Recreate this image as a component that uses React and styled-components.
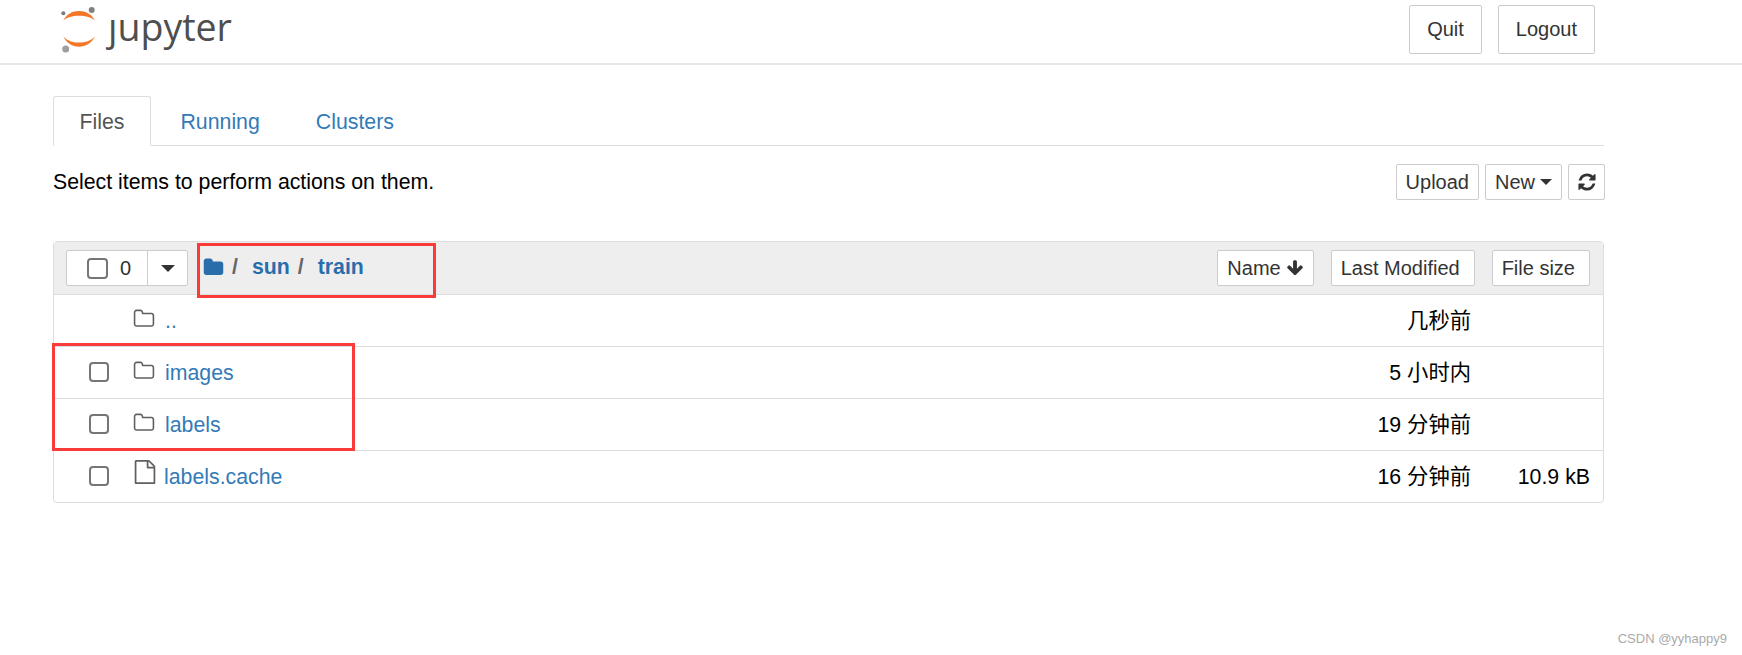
import React from 'react';
import styled, { createGlobalStyle } from 'styled-components';

const FONT = '"Liberation Sans", "Noto Sans CJK SC", Arial, sans-serif';

const ICONS = {
    folder: 'M1728 608v704q0 92-66 158t-158 66h-1216q-92 0-158-66t-66-158v-960q0-92 66-158t158-66h320q92 0 158 66t66 158v32h672q92 0 158 66t66 158z',
    folderOpen: 'M1600 1312v-704q0-40-28-68t-68-28h-704q-40 0-68-28t-28-68v-64q0-40-28-68t-68-28h-320q-40 0-68 28t-28 68v960q0 40 28 68t68 28h1216q40 0 68-28t28-68zm128-704v704q0 92-66 158t-158 66h-1216q-92 0-158-66t-66-158v-960q0-92 66-158t158-66h320q92 0 158 66t66 158v32h672q92 0 158 66t66 158z',
    file: 'M1596 380q28 28 48 76t20 88v1152q0 40-28 68t-68 28h-1344q-40 0-68-28t-28-68v-1600q0-40 28-68t68-28h896q40 0 88 20t76 48zm-444-244v376h376q-10-29-22-41l-313-313q-12-12-41-22zm384 1528v-1024h-416q-40 0-68-28t-28-68v-416h-768v1536h1280z',
    arrowDown: 'M1675 832q0 53-37 90l-651 652q-39 37-91 37-53 0-90-37l-651-652q-38-36-38-90 0-53 38-91l74-75q39-37 91-37 53 0 90 37l294 294v-704q0-52 38-90t90-38h128q52 0 90 38t38 90v704l294-294q37-37 90-37 52 0 91 37l75 75q37 39 37 91z',
    refresh: 'M1639 1056q0 5-1 7-64 268-268 434.5t-478 166.5q-146 0-282.5-55t-243.5-157l-129 129q-19 19-45 19t-45-19-19-45v-448q0-26 19-45t45-19h448q26 0 45 19t19 45-19 45l-137 137q71 66 161 102t187 36q134 0 250-65t186-179q11-17 53-117 8-23 30-23h192q13 0 22.5 9.5t9.5 22.5zm25-800v448q0 26-19 45t-45 19h-448q-26 0-45-19t-19-45 19-45l138-138q-148-137-349-137-134 0-250 65t-186 179q-11 17-53 117-8 23-30 23h-199q-13 0-22.5-9.5t-9.5-22.5v-7q65-268 270-434.5t480-166.5q146 0 284 55.5t245 156.5l130-129q19-19 45-19t45 19 19 45z',
};

const rows = [
    { id: 'up', kind: 'folderOpen', name: '..', time: '几秒前', size: '', noCheck: true },
    { id: 'images', kind: 'folderOpen', name: 'images', time: '5 小时内', size: '' },
    { id: 'labels', kind: 'folderOpen', name: 'labels', time: '19 分钟前', size: '' },
    { id: 'cache', kind: 'file', name: 'labels.cache', time: '16 分钟前', size: '10.9 kB' },
];

function Icon({ name, size, color }) {
    return (
        <svg width={size} height={size} viewBox="0 0 1792 1792" fill={color} style={{ flex: 'none' }}>
            <path d={ICONS[name]} />
        </svg>
    );
}

function LogoMark() {
    return (
        <svg width="38" height="48" viewBox="0 0 38 48" style={{ flex: 'none' }}>
            <path d="M2.3 15.7 C8 2.7 28 2.7 34 15.7 C28 9 8 9 2.3 15.7 Z" fill="#f37726" />
            <path d="M2.3 31 C8 39.8 28 39.8 34 31 C28 45.3 8 45.3 2.3 31 Z" fill="#f37726" />
            <circle cx="30.7" cy="5" r="3" fill="#808080" />
            <circle cx="2.3" cy="8.3" r="2" fill="#7a7a7a" />
            <circle cx="4.7" cy="44" r="3.5" fill="#9e9e9e" />
        </svg>
    );
}

function App() {
    return (
        <Page>
            <GlobalStyle />
            <Header>
                <Logo>
                    <LogoMark />
                    <Wordmark>ȷupyter</Wordmark>
                </Logo>
                <HeaderActions>
                    <HeaderButton>Quit</HeaderButton>
                    <HeaderButton>Logout</HeaderButton>
                </HeaderActions>
            </Header>
            <Container>
                <Tabs>
                    <Tab $active>Files</Tab>
                    <Tab>Running</Tab>
                    <Tab>Clusters</Tab>
                </Tabs>
                <ActionBar>
                    <span>Select items to perform actions on them.</span>
                    <ActionGroup>
                        <Button>Upload</Button>
                        <Button>
                            New <Caret />
                        </Button>
                        <IconButton>
                            <Icon name="refresh" size={20} color="#333" />
                        </IconButton>
                    </ActionGroup>
                </ActionBar>
                <Panel>
                    <PanelHead>
                        <SelectGroup>
                            <SelectMain>
                                <Check $header type="checkbox" />
                                <span>0</span>
                            </SelectMain>
                            <SelectToggle>
                                <Caret $big />
                            </SelectToggle>
                        </SelectGroup>
                        <Breadcrumb>
                            <Icon name="folder" size={21} color="#296eaa" />
                            <Slash>/</Slash>
                            <Crumb>sun</Crumb>
                            <Slash>/</Slash>
                            <Crumb>train</Crumb>
                        </Breadcrumb>
                        <SortGroup>
                            <Button>
                                Name <Icon name="arrowDown" size={18} color="#333" />
                            </Button>
                            <SortButton>Last Modified</SortButton>
                            <SortButton>File size</SortButton>
                        </SortGroup>
                    </PanelHead>
                    <RowList>
                        {rows.map((row) => (
                            <Row key={row.id}>
                                <CheckSlot>{!row.noCheck && <Check type="checkbox" />}</CheckSlot>
                                <IconSlot $file={row.kind === 'file'}>
                                    <Icon name={row.kind} size={row.kind === 'file' ? 24 : 22} color="#5f5f5f" />
                                </IconSlot>
                                <ItemName $file={row.kind === 'file'}>{row.name}</ItemName>
                                <Time>{row.time}</Time>
                                <Size>{row.size}</Size>
                            </Row>
                        ))}
                    </RowList>
                    <PathMark />
                    <RowsMark />
                </Panel>
            </Container>
            <Watermark>CSDN @yyhappy9</Watermark>
        </Page>
    );
}

const GlobalStyle = createGlobalStyle`
    html, body {
        margin: 0;
        padding: 0;
        background: #fff;
        overflow: hidden;
    }
    * {
        box-sizing: border-box;
    }
`;

const Page = styled.div`
    position: relative;
    height: 655px;
    font-family: ${FONT};
    font-size: 21.3px;
    color: #000;
`;

const Header = styled.header`
    height: 65px;
    padding: 5px 147px 9px 61px;
    border-bottom: 2px solid #e7e7e7;
    display: flex;
    justify-content: space-between;
`;

const Logo = styled.div`
    display: flex;
    align-items: flex-start;
    gap: 9px;
`;

const Wordmark = styled.span`
    font-family: "Open Sans", sans-serif;
    font-size: 37.5px;
    line-height: 44px;
    color: #4e4e4e;
`;

const HeaderActions = styled.div`
    display: flex;
    gap: 16px;
`;

const HeaderButton = styled.button`
    height: 49px;
    padding: 0 17px;
    background: #fff;
    border: 1px solid #ccc;
    border-radius: 2px;
    font-family: inherit;
    font-size: 20px;
    color: #333;
`;

const Container = styled.main`
    width: 1551px;
    margin-left: 53px;
    padding-top: 31px;
`;

const Tabs = styled.nav`
    display: flex;
    gap: 3px;
    height: 50px;
    border-bottom: 1px solid #ddd;
`;

const Tab = styled.a`
    height: 50px;
    padding: 2px 25.5px 0;
    display: flex;
    align-items: center;
    border: 1px solid ${(p) => (p.$active ? '#ddd' : 'transparent')};
    border-bottom-color: ${(p) => (p.$active ? '#fff' : 'transparent')};
    border-radius: 3px 3px 0 0;
    color: ${(p) => (p.$active ? '#555' : '#337ab7')};
`;

const ActionBar = styled.div`
    margin: 18px -1px 0 0;
    display: flex;
    justify-content: space-between;
    align-items: center;
`;

const ActionGroup = styled.div`
    display: flex;
    gap: 6px;
`;

const Button = styled.button`
    height: 36px;
    padding: 0 9px;
    display: inline-flex;
    align-items: center;
    gap: 5px;
    background: #fff;
    border: 1px solid #ccc;
    border-radius: 2px;
    font-family: inherit;
    font-size: 20px;
    color: #333;
    white-space: nowrap;
`;

const IconButton = styled(Button)`
    padding: 0 7.5px;
`;

const SortButton = styled(Button)`
    padding-right: 14px;
`;

const Caret = styled.i`
    display: inline-block;
    width: 0;
    height: 0;
    border-top: ${(p) => (p.$big ? '7px' : '6px')} solid #333;
    border-left: ${(p) => (p.$big ? '7px' : '6px')} solid transparent;
    border-right: ${(p) => (p.$big ? '7px' : '6px')} solid transparent;
`;

const Panel = styled.section`
    position: relative;
    margin-top: 41px;
    border: 1px solid #ddd;
    border-radius: 4px;
`;

const PanelHead = styled.div`
    height: 53px;
    padding: 8px 13px 8px 12px;
    display: flex;
    align-items: flex-start;
    background: #eee;
    border-bottom: 1px solid #ddd;
`;

const SelectGroup = styled.div`
    width: 122px;
    height: 36px;
    display: flex;
    background: #fff;
    border: 1px solid #ccc;
    border-radius: 2px;
    font-size: 20px;
    color: #333;
`;

const SelectMain = styled.div`
    width: 81px;
    padding-left: 20px;
    display: flex;
    align-items: center;
    gap: 12px;
    border-right: 1px solid #ccc;
`;

const SelectToggle = styled.div`
    flex: 1;
    display: flex;
    align-items: center;
    justify-content: center;
`;

const Check = styled.input`
    appearance: none;
    display: block;
    margin: 0;
    width: ${(p) => (p.$header ? '21px' : '20px')};
    height: ${(p) => (p.$header ? '21px' : '20px')};
    background: #fff;
    border: 2px solid #767676;
    border-radius: 4px;
`;

const Breadcrumb = styled.div`
    margin-left: 15px;
    height: 34px;
    display: flex;
    align-items: center;
    color: #666;
`;

const Slash = styled.span`
    margin: 0 14px 0 8px;
    font-weight: bold;
`;

const Crumb = styled.a`
    font-weight: bold;
    color: #296eaa;
`;

const SortGroup = styled.div`
    margin-left: auto;
    display: flex;
    gap: 17px;
`;

const RowList = styled.div`
    display: flex;
    flex-direction: column;
`;

const Row = styled.div`
    height: 52px;
    display: flex;
    align-items: center;
    border-bottom: 1px solid #ddd;

    &:last-child {
        height: 51px;
        border-bottom: 0;
    }
`;

const CheckSlot = styled.div`
    width: 79px;
    margin-top: -2px;
    padding-left: 35px;
`;

const IconSlot = styled.div`
    width: 32px;
    display: flex;
    margin-top: ${(p) => (p.$file ? '-10px' : '-4px')};
`;

const ItemName = styled.a`
    flex: 1;
    margin-top: 2px;
    margin-left: ${(p) => (p.$file ? '-1px' : '0')};
    color: #337ab7;
`;

const Time = styled.span`
    margin-top: -4px;
    text-align: right;
    white-space: nowrap;
`;

const Size = styled.span`
    width: 132px;
    margin-top: 2px;
    padding-right: 13px;
    text-align: right;
    white-space: nowrap;
`;

const Mark = styled.div`
    position: absolute;
    border: 3px solid #fb3a3a;
    pointer-events: none;
`;

const PathMark = styled(Mark)`
    left: 143px;
    top: 1px;
    width: 239px;
    height: 55px;
`;

const RowsMark = styled(Mark)`
    left: -2px;
    top: 101px;
    width: 303px;
    height: 108px;
`;

const Watermark = styled.div`
    position: absolute;
    right: 15px;
    bottom: 9px;
    font-size: 13px;
    color: #aaa;
`;

export default App;
